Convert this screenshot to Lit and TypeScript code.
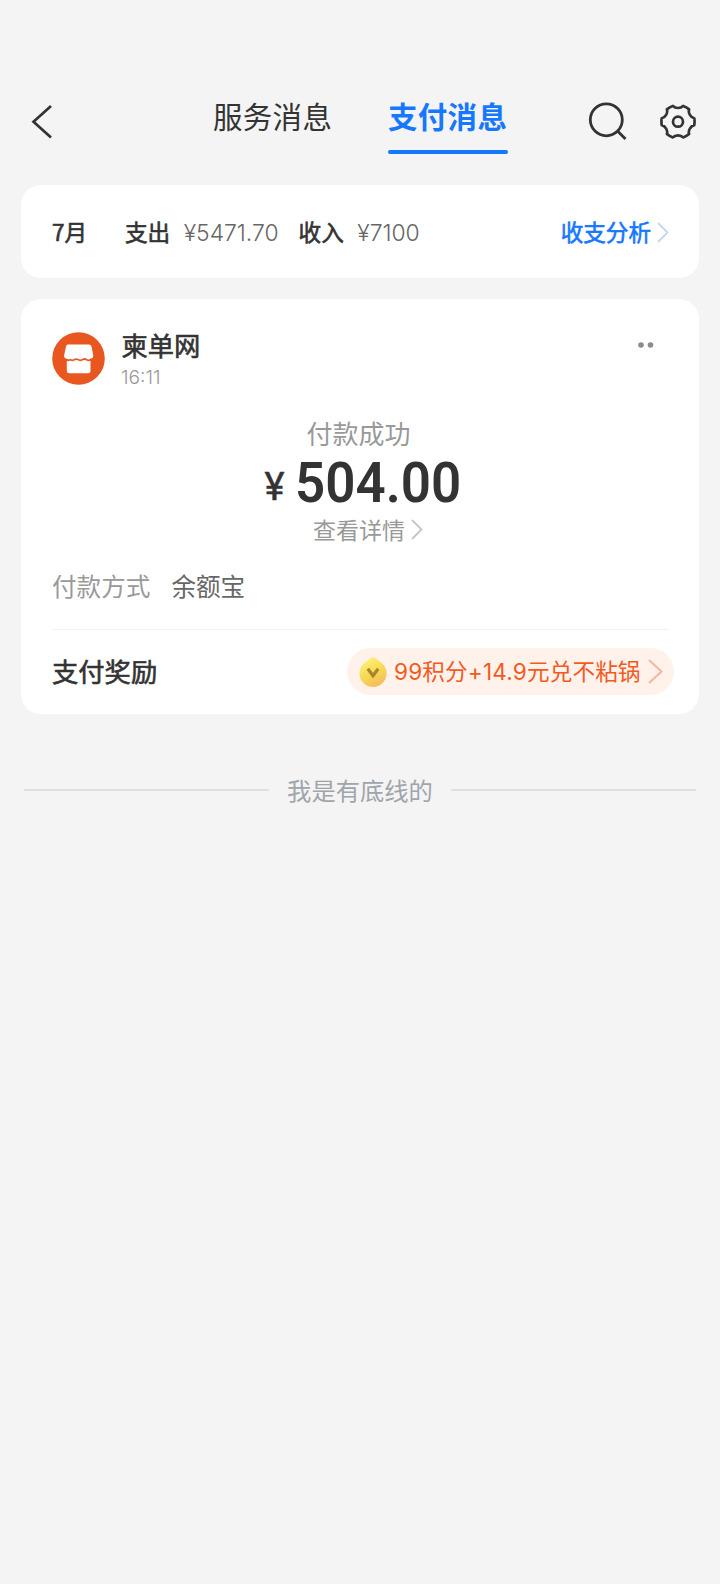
import { LitElement, html, css } from "lit";
import { customElement } from "lit/decorators.js";

// Outline of a gear with six flat teeth joined by shallow hollows.
function gearPath(cx: number, cy: number): string {
  const at = (r: number, deg: number) => {
    const a = (deg * Math.PI) / 180;
    return `${(cx + r * Math.cos(a)).toFixed(2)} ${(cy + r * Math.sin(a)).toFixed(2)}`;
  };
  let d = `M${at(16.6, -12)}`;
  for (let k = 0; k < 360; k += 60) {
    d += ` Q${at(16.9, k)} ${at(16.6, k + 12)}`;
    d += ` C${at(13.3, k + 18)} ${at(13.3, k + 42)} ${at(16.6, k + 48)}`;
  }
  return d + "Z";
}

@customElement("app-root")
class AppRoot extends LitElement {
  static styles = css`
    :host {
      display: block;
      box-sizing: border-box;
      min-height: 1584px;
      background: #f4f4f4;
      color: #333;
      font-family: "Noto Sans CJK SC", "Noto Sans", sans-serif;
    }
    svg { display: block; flex: none; }
    .num { font-family: Inter, "Noto Sans CJK SC", sans-serif; }
    .nav {
      display: grid;
      grid-template-columns: 213px 120px 120px 1fr;
      padding: 93px 24px 0 0;
      height: 60px;
      margin-bottom: 32px;
    }
    .back { padding: 12px 0 0 31px; }
    .tab { font-size: 29.5px; line-height: 44px; white-space: nowrap; letter-spacing: 0.3px; }
    .tab.active { margin-left: 55px; width: 120px; color: #1677ff; font-weight: 700; }
    .bar { height: 3.5px; margin-top: 13px; border-radius: 2px; background: #1677ff; width: 119.5px; }
    .tools { display: flex; justify-content: flex-end; gap: 32px; padding-top: 9px; }
    .card { margin: 0 21px 21px; background: #fff; border-radius: 20px; }
    .medium { -webkit-text-stroke: 0.6px currentColor; }
    .summary {
      height: 93px; padding: 1px 30px 0 31px; box-sizing: border-box;
      display: flex; align-items: center;
      font-size: 22.6px; line-height: 32px; white-space: nowrap;
    }
    .month { width: 73px; }
    .money { font-weight: 300; color: #666; margin: 2px 20px 0 13.5px; font-size: 22.9px; }
    .link { margin-left: auto; display: flex; align-items: center; gap: 6px; color: #1677ff; }
    .bill { height: 415px; padding: 0 30px 0 31px; box-sizing: border-box; }
    .merchant { display: flex; padding-top: 33px; height: 54px; }
    .who { flex: 1; padding-left: 16.5px; }
    .name { font-size: 26.3px; line-height: 28px; margin-top: -1.5px; }
    .time { font-size: 19.2px; line-height: 24px; color: #999; font-weight: 300; margin-top: 6px; margin-left: -0.5px; }
    .dots { padding: 10px 15px 0 0; }
    .center { display: flex; flex-direction: column; align-items: center; }
    .status { font-size: 26px; line-height: 36px; color: #999; margin-top: 28.5px; margin-right: 4px; }
    .amount {
      display: flex; align-items: baseline; font-family: Roboto, sans-serif; font-weight: 600;
      font-size: 56px; line-height: 48px; margin: 8px 0 0.5px 4px;
    }
    .yen { font-size: 38px; font-weight: 400; margin-right: 10px; transform: translateY(-2px); -webkit-text-stroke: 0.5px currentColor; }
    .figure { transform: scaleX(0.945); transform-origin: 0 50%; margin-right: -10px; }
    .detail { display: flex; align-items: center; gap: 6px; font-size: 23px; line-height: 32px; color: #999; margin-left: 15px; }
    .method { display: flex; gap: 21px; font-size: 24.6px; line-height: 34px; color: #999; margin-top: 23px; height: 61px; }
    .value { color: #666; }
    .rule { height: 1px; background: #f2f2f2; }
    .reward { display: flex; align-items: center; justify-content: space-between; margin-right: -5px; padding-top: 18px; height: 47px; font-size: 26.3px; }
    .label { margin-bottom: 3px; }
    .pill {
      display: flex; align-items: center; box-sizing: border-box; width: 327px; height: 47px;
      border-radius: 24px; background: #fff2eb; color: #f25a1e; font-size: 22.6px; padding: 0 11px 0 12px; white-space: nowrap;
    }
    .copy { flex: 1; padding-left: 7px; margin-bottom: 2px; letter-spacing: 0.15px; }
    .end { display: flex; align-items: center; gap: 18px; padding: 0 24px; margin-top: 59px; height: 34px; color: #a0a5ab; font-size: 24.3px; line-height: 34px; }
    .line { flex: 1; height: 2px; background: #dedfe0; }
  `;

  chevron(w: number, h: number, color: string, stroke = 1.8) {
    return html`<svg width=${w} height=${h} viewBox="0 0 ${w} ${h}" fill="none" stroke=${color} stroke-width=${stroke}>
      <path d="M1 1 L${w - 1.5} ${h / 2} L1 ${h - 1}" /></svg>`;
  }

  render() {
    return html`
      <header class="nav">
        <div class="back">
          <svg width="22" height="34" viewBox="0 0 22 34" fill="none" stroke="#333" stroke-width="2.7"><path d="M20 1 L2.500 16.700 L20 32.500" /></svg>
        </div>
        <div class="tab">服务消息</div>
        <div class="tab active">支付消息<div class="bar"></div></div>
        <div class="tools">
          <svg width="40" height="40" viewBox="0 0 40 40" fill="none" stroke="#333" stroke-width="2.800"><circle cx="18.300" cy="17.800" r="16" /><path d="M29.500 29 L37.500 37" /></svg>
          <svg width="36" height="40" viewBox="0 0 36 40" fill="none" stroke="#333" stroke-width="2.700" stroke-linejoin="round">
            <circle cx="18" cy="19.700" r="5" />
            <path d=${gearPath(18, 19.7)} />
          </svg>
        </div>
      </header>
      <section class="card summary">
        <span class="month medium">7月</span>
        <span class="medium">支出</span><span class="money num">¥5471.70</span>
        <span class="medium">收入</span><span class="money num">¥7100</span>
        <span class="link"><span class="medium">收支分析</span>${this.chevron(12, 21, "#c5d5f5")}</span>
      </section>
      <section class="card bill">
        <div class="merchant">
          <svg width="53" height="53" viewBox="0 0 53 53">
            <circle cx="26.500" cy="26.500" r="26.300" fill="#e95720" />
            <path fill="#fff" d="M16 12.500 H37 Q39 12.500 39.500 14.500 L41.200 23 Q41.500 26.500 38.500 26.500 Q36.500 28.300 34.500 26.500 Q32.300 25.500 30.300 26.800 Q28.300 28.300 26.300 26.800 Q24.300 25.500 22.300 26.800 Q20.300 28.300 18.300 26.800 Q16 28 14 26.500 Q11.700 26 12.200 23 L14 14.500 Q14.500 12.500 16 12.500 Z" />
            <path fill="#fff" d="M14.800 28.800 Q16.500 29.700 18.300 28.600 Q20.300 30 22.300 28.600 Q24.300 27.500 26.300 28.600 Q28.300 30 30.300 28.600 Q32.300 27.500 34.500 28.600 Q36.500 29.700 38.500 28.800 V39 Q38.500 41.300 36.200 41.300 H17.100 Q14.800 41.300 14.800 39 Z" />
          </svg>
          <div class="who"><div class="name medium">柬单网</div><div class="time num">16:11</div></div>
          <div class="dots"><svg width="16" height="6" viewBox="0 0 16 6" fill="#8c8c8c"><circle cx="3" cy="3" r="2.800" /><circle cx="12.500" cy="3" r="2.800" /></svg></div>
        </div>
        <div class="center">
          <div class="status">付款成功</div>
          <div class="amount"><span class="yen">¥</span><span class="figure">504.00</span></div>
          <div class="detail">查看详情${this.chevron(12, 21, "#c4c4c4")}</div>
        </div>
        <div class="method"><span>付款方式</span><span class="value">余额宝</span></div>
        <div class="rule"></div>
        <div class="reward">
          <span class="medium label">支付奖励</span>
          <div class="pill">
            <svg width="28" height="30" viewBox="0 0 28 30">
              <defs><linearGradient id="g" x1="0.200" y1="0" x2="0.700" y2="1"><stop offset="0" stop-color="#fff27a" /><stop offset="0.500" stop-color="#f7dc55" /><stop offset="1" stop-color="#f6b95a" /></linearGradient></defs>
              <path fill="url(#g)" d="M11.500 1.300 Q14 -0.500 16.500 1.300 L23.500 6.800 A13.500 13.500 0 1 1 4.500 6.800 Z" />
              <path fill="none" stroke="#a8872a" stroke-width="3.200" d="M8.800 11.800 L14 18.800 L19.200 11.800" />
            </svg>
            <span class="copy num">99积分+14.9元兑不粘锅</span>
            ${this.chevron(15, 25, "#f5b79d", 2.2)}
          </div>
        </div>
      </section>
      <footer class="end"><i class="line"></i><span>我是有底线的</span><i class="line"></i></footer>
    `;
  }
}
